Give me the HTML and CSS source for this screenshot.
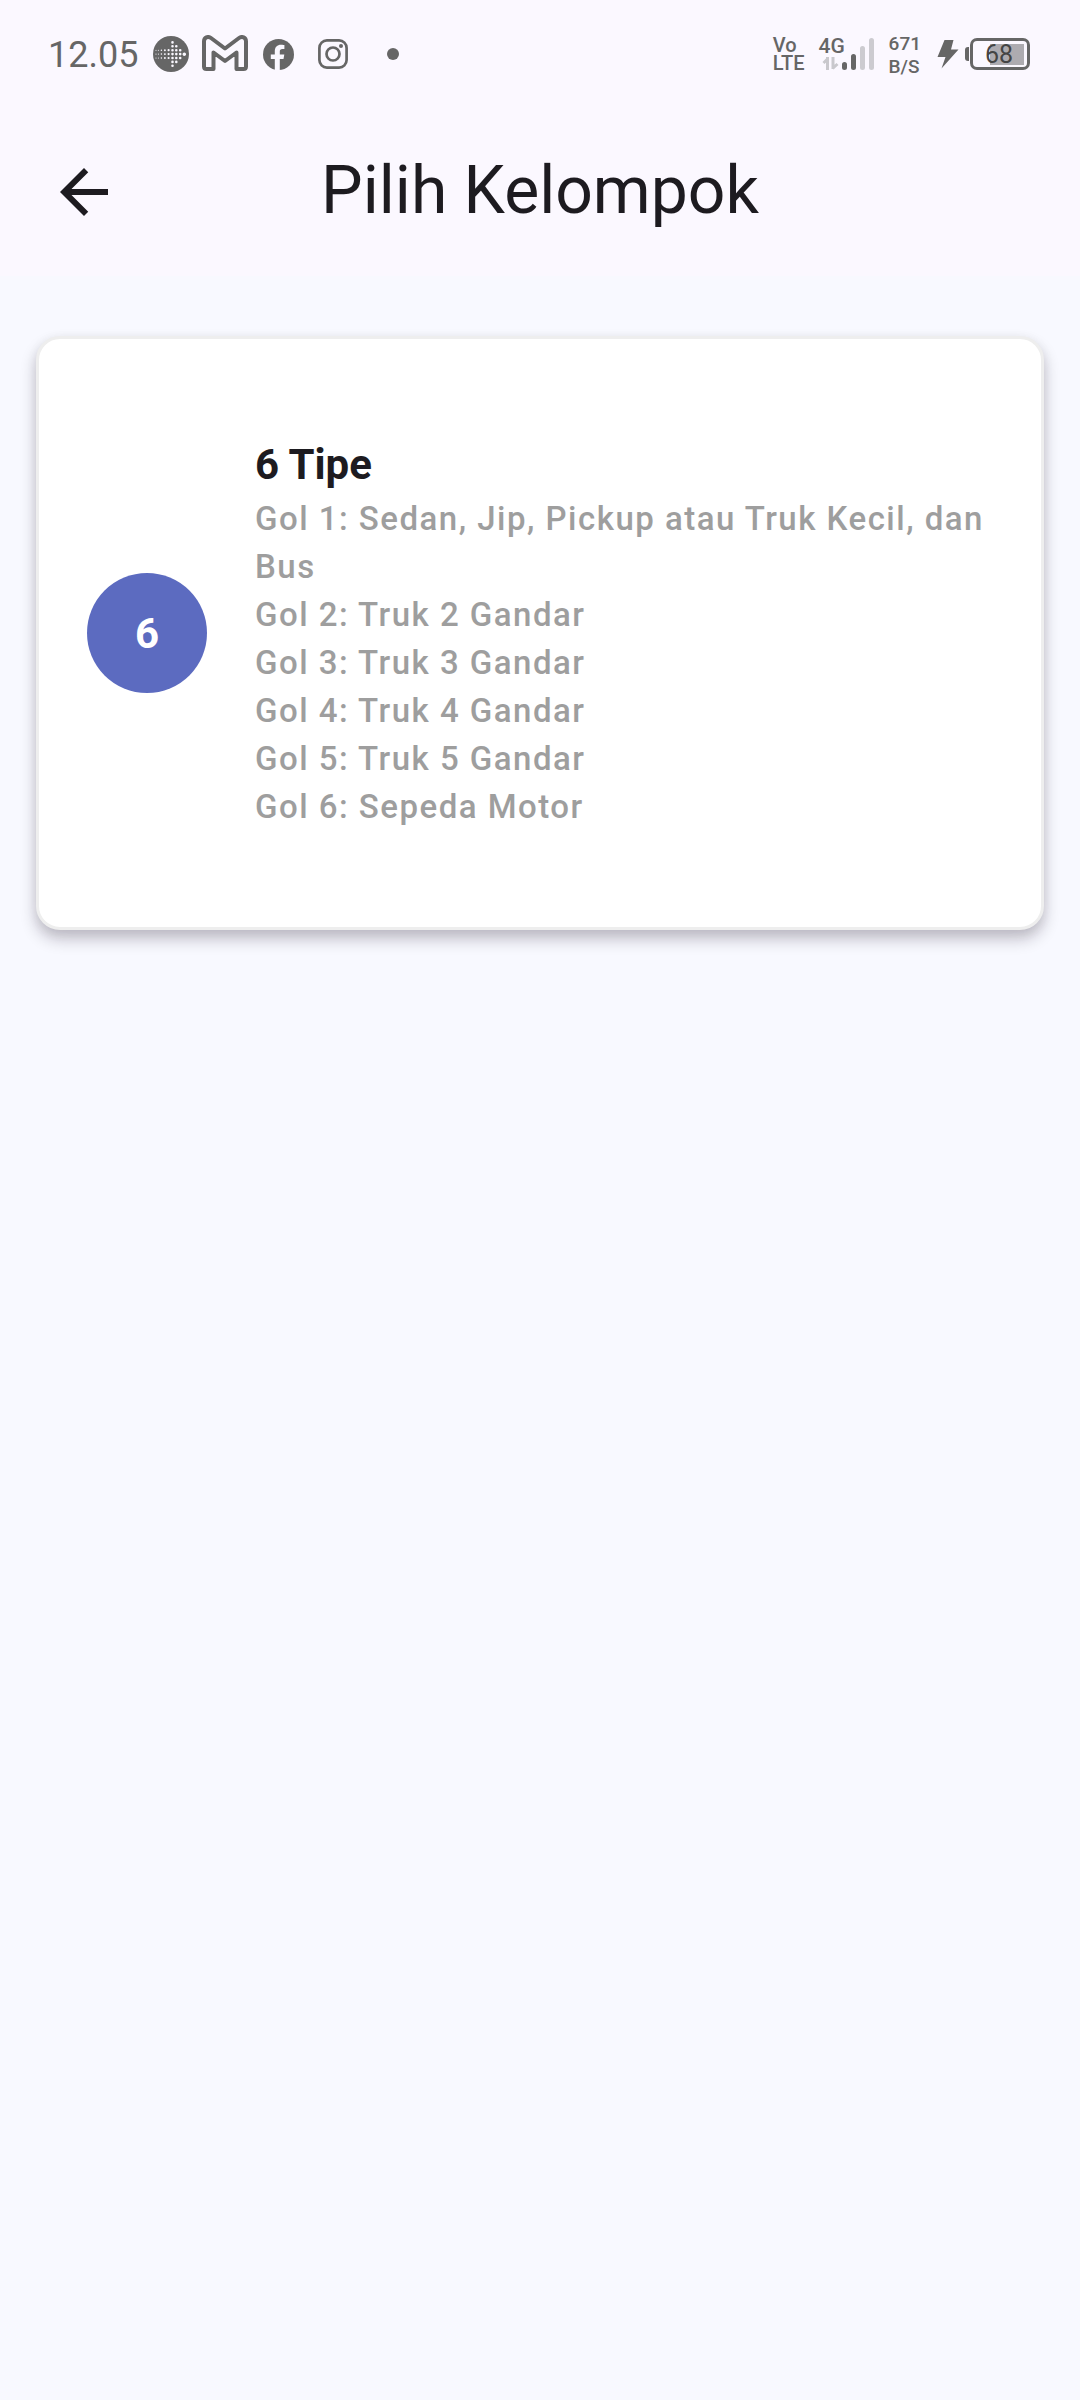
FILE: index.html
```html
<!DOCTYPE html>
<html lang="id">
<head>
<meta charset="utf-8">
<meta name="viewport" content="width=device-width, initial-scale=1">
<title>Pilih Kelompok</title>
<link rel="stylesheet" href="styles.css">
</head>
<body>
<header class="top">
  <div class="status">
    <div class="status-left">
      <span class="clock">12.05</span>
      <svg class="icon-fit" width="36" height="36" viewBox="0 0 36 36" aria-hidden="true">
        <circle cx="18" cy="18" r="18" fill="#666"/>
        <g fill="none" stroke="#faf8ff" stroke-linecap="round">
          <path stroke-width="2.6" stroke-dasharray="0 3.9" d="M19.5 6.4V30M23.3 10.3V27M27.2 14.2V22.5"/>
          <path stroke-width="3.4" d="M31.3 18.1V18.2"/>
          <path stroke-width="2.2" stroke-dasharray="0 3.9" d="M15.6 14.2V22.5"/>
          <path stroke-width="1.9" stroke-dasharray="0 3.9" d="M11.9 14.2V22.5"/>
          <path stroke-width="1.5" stroke-dasharray="0 3.9" d="M8.4 14.2V22.5"/>
          <path stroke-width="1.1" stroke-dasharray="0 3.9" d="M5.4 14.2V22.5M3 14.2V22.5"/>
        </g>
      </svg>
      <svg class="icon-mail" width="46" height="36" viewBox="0 0 46 36" fill="none" stroke="#666" stroke-width="4" stroke-linejoin="round" aria-hidden="true">
        <path d="M2 6.5C2 2.5 6 .8 9 3L23 13.5 37 3C40 .8 44 2.500 44 6.500V31.500Q44 34 41.500 34H34.500V17.500L23 26 11.500 17.500V34H4.500Q2 34 2 31.500Z"/>
      </svg>
      <svg class="icon-fb" width="31" height="31" viewBox="0 0 31 31" aria-hidden="true">
        <circle cx="15.500" cy="15.500" r="15.500" fill="#666"/>
        <path fill="#faf8ff" d="M11.800 31V20H7.800V15.400H11.800V12C11.800 8 14.200 5.700 18 5.700C19.700 5.700 21.400 6 21.400 6V10H19.400C17.400 10 16.800 11.200 16.800 12.500V15.400H21.300L20.500 20H16.800V31Z"/>
      </svg>
      <svg class="icon-ig" width="30" height="30" viewBox="0 0 30 30" fill="none" stroke="#666" stroke-width="2.700" aria-hidden="true">
        <rect x="1.400" y="1.400" width="27.200" height="27.200" rx="7.500"/>
        <circle cx="15" cy="15" r="6.500"/>
        <circle cx="23" cy="7" r="2" fill="#666" stroke="none"/>
      </svg>
      <span class="more-dot"></span>
    </div>
    <div class="status-right">
      <div class="volte"><span>Vo</span><span>LTE</span></div>
      <div class="signal">
        <span class="network">4G</span>
        <svg width="55" height="32" viewBox="0 0 55 32" aria-hidden="true">
          <g fill="none" stroke="#c9c8cd" stroke-width="3"><path d="M8.500 32V19M9 20.500L4.500 25M14 19V31M13.500 30.500L18.500 26"/></g>
          <g fill="none" stroke-width="5" stroke-linecap="round">
            <path stroke="#666" d="M25.500 26.500V29.500M34.500 18.500V29.500"/>
            <path stroke="#cccbd0" d="M43.500 10.500V29.500M52.500 2.500V29.500"/>
          </g>
        </svg>
      </div>
      <div class="speed"><span>671</span><span>B/S</span></div>
      <svg class="icon-bolt" width="22" height="29" viewBox="0 0 22 29" fill="#666" aria-hidden="true">
        <path d="M7.500 0H16.500L14 9.500H21.500L4.500 28.500 8.500 17H.500Z"/>
      </svg>
      <div class="battery"><span class="nub"></span><span class="cell">68</span></div>
    </div>
  </div>
  <div class="appbar">
    <button class="back" type="button" aria-label="Kembali">
      <svg width="48" height="48" viewBox="0 0 16 16" fill="#1d1b20" aria-hidden="true">
        <path d="M16 7H3.830L9.420 1.410 8 0 0 8 8 16 9.410 14.590 3.830 9H16Z"/>
      </svg>
    </button>
    <h1 class="title">Pilih Kelompok</h1>
  </div>
</header>
<main class="content">
  <button class="card" type="button">
    <span class="badge">6</span>
    <span class="info">
      <span class="name">6 Tipe</span>
      <span class="line">Gol 1: Sedan, Jip, Pickup atau Truk Kecil, dan Bus</span>
      <span class="line">Gol 2: Truk 2 Gandar</span>
      <span class="line">Gol 3: Truk 3 Gandar</span>
      <span class="line">Gol 4: Truk 4 Gandar</span>
      <span class="line">Gol 5: Truk 5 Gandar</span>
      <span class="line">Gol 6: Sepeda Motor</span>
    </span>
  </button>
</main>
</body>
</html>
```
FILE: styles.css
```css
* {
  box-sizing: border-box;
}

body {
  margin: 0;
  min-height: 100vh;
  background: #f8f9ff;
  color: #1d1b20;
  font-family: Roboto, "Liberation Sans", sans-serif;
}

button {
  margin: 0;
  font: inherit;
  color: inherit;
  text-align: left;
}

svg {
  display: block;
  flex: none;
}

.top {
  background: #fbf8ff;
}

/* status bar */
.status {
  display: flex;
  justify-content: space-between;
  align-items: center;
  height: 108px;
  padding: 0 50px 0 48px;
  color: #666;
}

.status-left,
.status-right {
  display: flex;
  align-items: center;
}

.clock {
  margin-right: 15px;
  padding-top: 2px;
  font-size: 36px;
  line-height: 42px;
}

.icon-mail {
  margin: 0 15px 2px 13px;
}

.icon-ig {
  margin: 0 39px 0 24px;
}

.more-dot {
  width: 12px;
  height: 12px;
  border-radius: 50%;
  background: #666;
}

.volte,
.speed {
  display: flex;
  flex-direction: column;
  font-weight: 500;
}

.volte {
  font-size: 20px;
  line-height: 18px;
  margin-right: 14px;
}

.speed {
  padding-top: 2px;
  font-size: 19px;
  line-height: 23px;
  margin: 0 16px 0 15px;
}

.signal {
  position: relative;
}

.network {
  position: absolute;
  left: 0;
  top: -4px;
  font-size: 21px;
  line-height: 24px;
  font-weight: 500;
}

.battery {
  display: flex;
  align-items: center;
  margin-left: 6px;
}

.nub {
  width: 4px;
  height: 14px;
  margin-right: 1px;
  border-radius: 3px 0 0 3px;
  background: #666;
}

.cell {
  width: 60px;
  height: 32px;
  border: 3px solid #666;
  border-radius: 7px;
  padding: 0 4px 0 2px;
  background: linear-gradient(#adabb0, #adabb0) right 3px center / 34px 21px no-repeat;
  color: #444;
  font-size: 25px;
  line-height: 28px;
  text-align: center;
}

/* app bar */
.appbar {
  display: grid;
  grid-template-columns: 168px 1fr 168px;
  align-items: center;
  height: 168px;
}

.back {
  display: flex;
  justify-content: center;
  align-items: center;
  width: 168px;
  height: 168px;
  padding: 0;
  border: 0;
  background: none;
}

.title {
  margin: 0;
  padding-bottom: 2px;
  font-size: 66px;
  line-height: 84px;
  font-weight: 400;
  text-align: center;
}

/* list of groups */
.content {
  padding: 60px 36px;
}

.card {
  display: flex;
  align-items: center;
  gap: 48px;
  width: 100%;
  padding: 96px 48px;
  border: 3px solid #eee;
  border-radius: 24px;
  background: #fff;
  box-shadow: 0 9px 16px rgba(20, 10, 30, 0.24), 0 3px 12px rgba(20, 10, 30, 0.06);
}

.badge {
  display: flex;
  flex: none;
  justify-content: center;
  align-items: center;
  width: 120px;
  height: 120px;
  border-radius: 50%;
  background: #5c6bc0;
  color: #fff;
  font-size: 42px;
  font-weight: 700;
}

.info {
  display: flex;
  flex: 1;
  flex-direction: column;
}

.name {
  font-size: 42px;
  line-height: 60px;
  font-weight: 700;
}

.line {
  color: #9e9e9e;
  font-size: 33px;
  line-height: 48px;
  font-weight: 500;
  letter-spacing: 0.045em;
}
```
